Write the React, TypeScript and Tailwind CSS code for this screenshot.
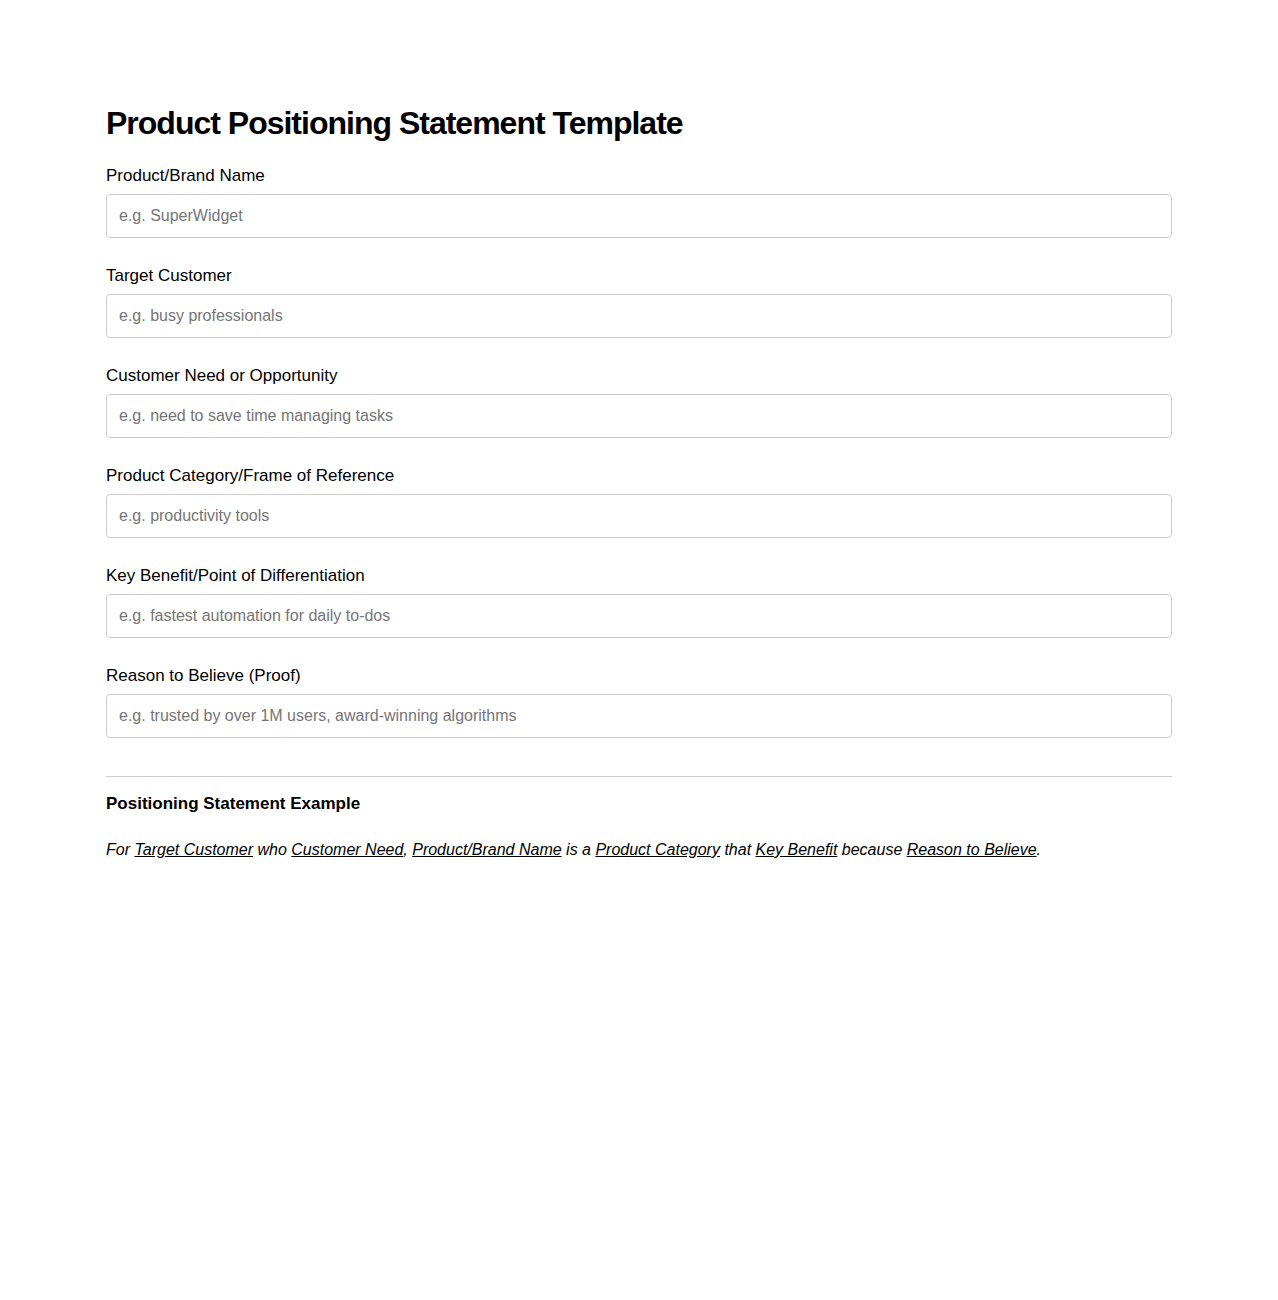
const fields = [
  { id: "brand", label: "Product/Brand Name", placeholder: "e.g. SuperWidget" },
  { id: "customer", label: "Target Customer", placeholder: "e.g. busy professionals" },
  { id: "need", label: "Customer Need or Opportunity", placeholder: "e.g. need to save time managing tasks" },
  { id: "category", label: "Product Category/Frame of Reference", placeholder: "e.g. productivity tools" },
  { id: "benefit", label: "Key Benefit/Point of Differentiation", placeholder: "e.g. fastest automation for daily to-dos" },
  { id: "proof", label: "Reason to Believe (Proof)", placeholder: "e.g. trusted by over 1M users, award-winning algorithms" },
];

export default function App() {
  return (
    <main className="bg-white px-[106px] py-[102px] font-['Liberation_Sans',Arial,sans-serif] text-base text-black">
      <h1 className="text-[32px] leading-[42px] font-bold tracking-[-1px]">Product Positioning Statement Template</h1>
      <form className="mt-[18px] flex flex-col gap-6">
        {fields.map((f) => (
          <div key={f.id} className="flex flex-col gap-1">
            <label htmlFor={f.id} className="text-[17px] leading-7">{f.label}</label>
            <input
              id={f.id}
              type="text"
              placeholder={f.placeholder}
              className="h-11 w-full rounded border border-[#cccccc] bg-white px-3 text-base placeholder:text-[#757575]"
            />
          </div>
        ))}
      </form>
      <section className="mt-[38px] border-t border-[#cccccc] pt-[13px]">
        <h2 className="text-[17px] leading-7 font-bold">Positioning Statement Example</h2>
        <p className="mt-[18px] leading-7 italic">
          For <u>Target Customer</u> who <u>Customer Need</u>, <u>Product/Brand Name</u> is a <u>Product Category</u> that{" "}
          <u>Key Benefit</u> because <u>Reason to Believe</u>.
        </p>
      </section>
    </main>
  );
}
